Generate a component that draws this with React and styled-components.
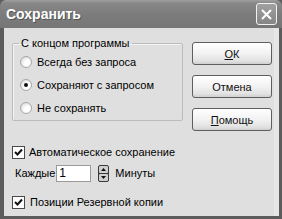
import React from 'react';
import styled, { createGlobalStyle } from 'styled-components';

const GlobalStyle = createGlobalStyle`
  html, body {
    margin: 0;
    padding: 0;
    background: #ffffff;
  }
  body {
    font-family: "Liberation Sans", Arial, sans-serif;
    font-size: 11px;
    color: #000;
  }
`;

const Window = styled.div`
  width: 282px;
  height: 219px;
  display: flex;
  flex-direction: column;
  box-sizing: border-box;
  background: #5c5c5c;
  overflow: hidden;
`;

const TitleBar = styled.div`
  height: 28px;
  flex: none;
  display: flex;
  align-items: center;
  justify-content: space-between;
  padding: 0 5px 0 6px;
  background: linear-gradient(#a0a0a0 0, #888888 3px, #7c7c7c 50%, #767676 100%);
  border-radius: 6px 6px 0 0;
`;

const Title = styled.span`
  color: #ffffff;
  font-weight: bold;
  font-size: 14px;
  text-shadow: 1px 1px 0 #555;
`;

const CloseButton = styled.div`
  width: 19px;
  height: 20px;
  border: 1px solid #f2f2f2;
  border-radius: 3px;
  background: linear-gradient(#a0a0a0, #868686);
  display: flex;
  align-items: center;
  justify-content: center;
`;

const Frame = styled.div`
  flex: 1;
  display: flex;
  flex-direction: column;
  margin: 0 3px 3px 4px;
  background: #dfdfdf;
  padding: 9px 0 0 8px;
  box-shadow: inset -5px 0 0 #e6e6e6;
`;

const TopRow = styled.div`
  display: flex;
  align-items: flex-start;
  gap: 9px;
`;

const GroupBox = styled.fieldset`
  margin: 0;
  padding: 0;
  width: 171px;
  box-sizing: border-box;
  border: 1px solid #bcbcbc;
  border-radius: 2px;
  box-shadow: inset 1px 1px 0 #f4f4f4;
`;

const Legend = styled.legend`
  margin-left: 6px;
  padding: 0 2px;
  font-size: 11px;
  line-height: 13px;
`;

const RadioList = styled.div`
  display: flex;
  flex-direction: column;
  gap: 9px;
  padding: 5px 0 5px 7px;
`;

const OptionRow = styled.label`
  display: flex;
  align-items: center;
  gap: ${(p) => p.$gap || 5}px;
  height: 14px;
  line-height: 14px;
  white-space: nowrap;
`;

const RadioCircle = styled.span`
  width: 12px;
  height: 12px;
  border-radius: 50%;
  box-sizing: border-box;
  border: 1px solid #a8a8a8;
  background: radial-gradient(circle at 65% 65%, #ffffff 30%, #e4e4e4 70%, #c8c8c8 100%);
  display: flex;
  align-items: center;
  justify-content: center;
  flex: none;

  &::after {
    content: '';
    width: 4px;
    height: 4px;
    border-radius: 50%;
    background: ${(p) => (p.$checked ? '#111' : 'transparent')};
  }
`;

const ButtonColumn = styled.div`
  display: flex;
  flex-direction: column;
  gap: 10px;
  margin-top: 5px;
`;

const Button = styled.div`
  width: 80px;
  height: 23px;
  box-sizing: border-box;
  border: 1px solid #5e5e5e;
  border-radius: 3px;
  background: linear-gradient(#ffffff 0%, #f2f2f2 50%, #e2e2e2 85%, #cfcfcf 100%);
  display: flex;
  align-items: center;
  justify-content: center;
  font-size: 11px;
  color: #111;

  u {
    text-decoration: underline;
    text-underline-offset: 1px;
  }
`;

const Options = styled.div`
  display: flex;
  flex-direction: column;
  margin-top: 14px;
`;

const CheckBox = styled.span`
  width: 13px;
  height: 13px;
  box-sizing: border-box;
  border: 1px solid #4a4a4a;
  background: #ffffff;
  display: flex;
  align-items: center;
  justify-content: center;
  flex: none;
`;

const SpinRow = styled.div`
  display: flex;
  align-items: center;
  margin: 5px 0 13px 3px;
  height: 18px;
`;

const NumberBox = styled.div`
  width: 35px;
  height: 17px;
  box-sizing: border-box;
  border: 1px solid #9a9a9a;
  background: #fff;
  padding-left: 2px;
  font-size: 12px;
  line-height: 15px;
  margin-left: 1px;
`;

const Spinner = styled.div`
  width: 11px;
  height: 17px;
  box-sizing: border-box;
  margin: 1px 6px 0 7px;
  border: 1px solid #3a3a3a;
  border-radius: 2px;
  background: #3a3a3a;
  display: flex;
  flex-direction: column;
  gap: 1px;
`;

const SpinHalf = styled.div`
  flex: 1;
  background: #cfcfcf;
  border-radius: 1px;
  display: flex;
  align-items: center;
  justify-content: center;
`;

const Check = () => (
  <svg width="9" height="9" viewBox="0 0 9 9">
    <path d="M1 4 L3.5 6.5 L8 1.5" fill="none" stroke="#111" strokeWidth="2" />
  </svg>
);

const Arrow = ({ down }) => (
  <svg width="5" height="3" viewBox="0 0 5 3">
    <path d={down ? 'M0 0 H5 L2.5 3 Z' : 'M0 3 H5 L2.5 0 Z'} fill="#111" />
  </svg>
);

const App = () => (
  <>
    <GlobalStyle />
    <Window>
      <TitleBar>
        <Title>Сохранить</Title>
        <CloseButton>
          <svg width="11" height="11" viewBox="0 0 11 11">
            <path d="M1 1 L10 10 M10 1 L1 10" stroke="#fff" strokeWidth="2" />
          </svg>
        </CloseButton>
      </TitleBar>
      <Frame>
        <TopRow>
          <GroupBox>
            <Legend>С концом программы</Legend>
            <RadioList>
              <OptionRow>
                <RadioCircle />
                Всегда без запроса
              </OptionRow>
              <OptionRow>
                <RadioCircle $checked />
                Сохраняют с запросом
              </OptionRow>
              <OptionRow>
                <RadioCircle />
                Не сохранять
              </OptionRow>
            </RadioList>
          </GroupBox>
          <ButtonColumn>
            <Button>
              <span><u>О</u>К</span>
            </Button>
            <Button>Отмена</Button>
            <Button>
              <span><u>П</u>омощь</span>
            </Button>
          </ButtonColumn>
        </TopRow>
        <Options>
          <OptionRow $gap={4}>
            <CheckBox>
              <Check />
            </CheckBox>
            Автоматическое сохранение
          </OptionRow>
          <SpinRow>
            Каждые
            <NumberBox>1</NumberBox>
            <Spinner>
              <SpinHalf>
                <Arrow />
              </SpinHalf>
              <SpinHalf>
                <Arrow down />
              </SpinHalf>
            </Spinner>
            Минуты
          </SpinRow>
          <OptionRow $gap={5}>
            <CheckBox>
              <Check />
            </CheckBox>
            Позиции Резервной копии
          </OptionRow>
        </Options>
      </Frame>
    </Window>
  </>
);

export default App;
